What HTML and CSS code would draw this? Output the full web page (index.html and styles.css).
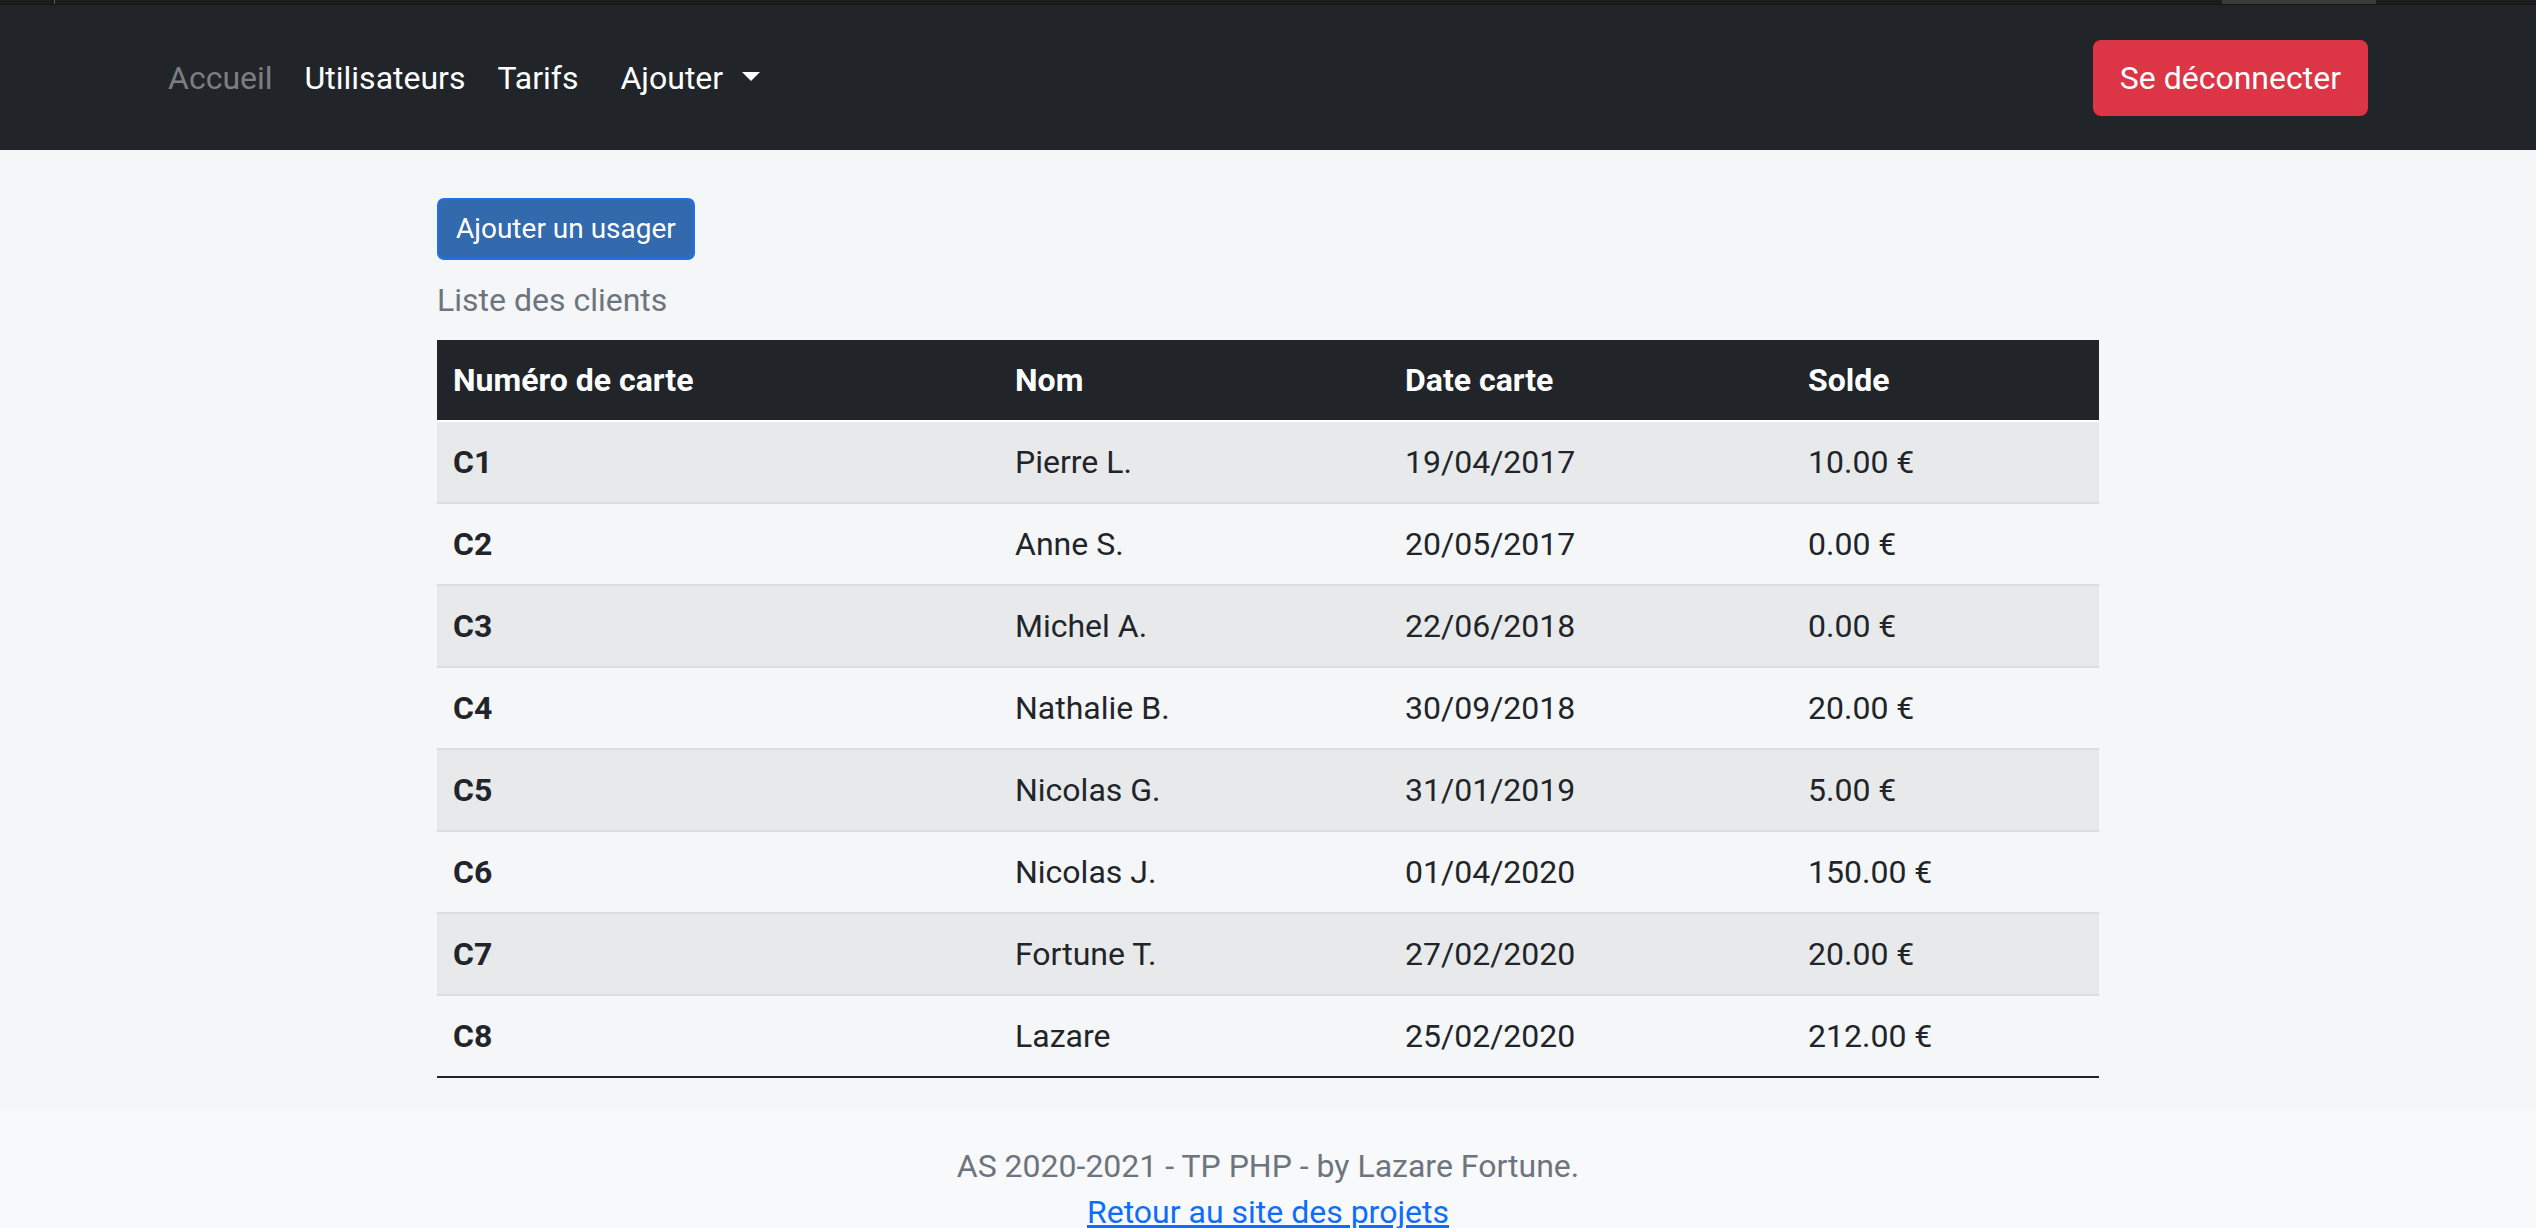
FILE: index.html
```html
<!DOCTYPE html>
<html lang="fr">
<head>
<meta charset="utf-8">
<title>Liste des clients</title>
<link rel="stylesheet" href="styles.css">
</head>
<body>
<div class="chrome">
  <span class="chrome-tick"></span>
  <span class="chrome-tab"></span>
</div>
<nav class="navbar">
  <ul class="nav-links">
    <li><a class="nav-link nav-link-muted" href="#">Accueil</a></li>
    <li><a class="nav-link" href="#">Utilisateurs</a></li>
    <li><a class="nav-link" href="#">Tarifs</a></li>
    <li class="dropdown"><a class="nav-link dropdown-toggle" href="#">Ajouter</a></li>
  </ul>
  <a class="btn-danger" href="#">Se déconnecter</a>
</nav>
<main class="main">
  <div class="content">
    <a class="btn-primary" href="#">Ajouter un usager</a>
    <table class="clients">
      <caption class="caption">Liste des clients</caption>
      <thead>
        <tr>
          <th class="col-num">Numéro de carte</th>
          <th class="col-nom">Nom</th>
          <th class="col-date">Date carte</th>
          <th class="col-solde">Solde</th>
        </tr>
      </thead>
      <tbody>
        <tr><th>C1</th><td>Pierre L.</td><td>19/04/2017</td><td>10.00 €</td></tr>
        <tr><th>C2</th><td>Anne S.</td><td>20/05/2017</td><td>0.00 €</td></tr>
        <tr><th>C3</th><td>Michel A.</td><td>22/06/2018</td><td>0.00 €</td></tr>
        <tr><th>C4</th><td>Nathalie B.</td><td>30/09/2018</td><td>20.00 €</td></tr>
        <tr><th>C5</th><td>Nicolas G.</td><td>31/01/2019</td><td>5.00 €</td></tr>
        <tr><th>C6</th><td>Nicolas J.</td><td>01/04/2020</td><td>150.00 €</td></tr>
        <tr><th>C7</th><td>Fortune T.</td><td>27/02/2020</td><td>20.00 €</td></tr>
        <tr><th>C8</th><td>Lazare</td><td>25/02/2020</td><td>212.00 €</td></tr>
      </tbody>
    </table>
  </div>
</main>
<footer class="footer">
  <p class="footer-line">AS 2020-2021 - TP PHP - by Lazare Fortune.</p>
  <p class="footer-line"><a class="footer-link" href="#">Retour au site des projets</a></p>
</footer>
</body>
</html>
```
FILE: styles.css
```css
html, body {
  margin: 0;
  padding: 0;
}

body {
  font-family: Roboto, "Noto Sans", sans-serif;
  font-size: 32px;
  line-height: 48px;
  color: #212529;
  background: #f8f9fa;
}

/* browser strip on top */
.chrome {
  position: relative;
  height: 4px;
  background: #1c1c1c;
  border-bottom: 1px solid #121212;
}
.chrome-tick {
  position: absolute;
  left: 54px;
  top: 0;
  width: 1px;
  height: 4px;
  background: #5a5a5a;
}
.chrome-tab {
  position: absolute;
  left: 2222px;
  top: 0;
  width: 154px;
  height: 4px;
  background: #3a3a3a;
}

/* navbar */
.navbar {
  height: 145px;
  background: #212529;
  display: flex;
  align-items: center;
  justify-content: space-between;
  padding: 0 168px 0 152px;
  box-sizing: border-box;
}
.nav-links {
  display: flex;
  align-items: center;
  list-style: none;
  margin: 0;
  padding: 0;
}
.nav-link {
  display: block;
  padding: 0 16px;
  color: #ffffff;
  text-decoration: none;
  line-height: 48px;
}
.nav-link-muted {
  color: #7b7e82;
}
.dropdown {
  margin-left: 10px;
}
.dropdown-toggle::after {
  content: "";
  display: inline-block;
  margin-left: 19px;
  vertical-align: 8px;
  border-top: 9.6px solid #ffffff;
  border-left: 9px solid transparent;
  border-right: 9px solid transparent;
}

.btn-danger {
  display: inline-block;
  background: #dc3545;
  color: #ffffff;
  text-decoration: none;
  border-radius: 8px;
  padding: 14px 27px;
  line-height: 48px;
}

/* main */
.main {
  background: #f5f6f8;
  padding: 48px 0 32px;
}
.content {
  width: 1662px;
  margin: 0 auto;
}
.btn-primary {
  display: inline-block;
  background: #336aad;
  color: #ffffff;
  text-decoration: none;
  font-size: 28px;
  line-height: 42px;
  padding: 8px 17px;
  border: 2px solid #1f6ff0;
  border-radius: 7px;
  vertical-align: top;
}

.clients {
  width: 1662px;
  border-collapse: collapse;
  table-layout: fixed;
}
.caption {
  caption-side: top;
  text-align: left;
  color: #6c757d;
  padding: 16px 0;
  line-height: 48px;
}
.clients th,
.clients td {
  box-sizing: border-box;
  padding: 16px;
  text-align: left;
  line-height: 48px;
  vertical-align: top;
}
.clients thead th {
  background: #212529;
  color: #ffffff;
  font-weight: 700;
  border-bottom: 2px solid #ffffff;
}
.clients tbody th {
  font-weight: 700;
}
.clients tbody tr {
  border-bottom: 2px solid #dcdde1;
}
.clients tbody tr:nth-child(odd) {
  background: #e8e9eb;
}
.clients tbody tr:last-child {
  border-bottom: 2px solid #212529;
}
.col-num { width: 562px; }
.col-nom { width: 390px; }
.col-date { width: 403px; }
.col-solde { width: 307px; }

/* footer */
.footer {
  background: #f8f9fa;
  padding: 32px 0 32px;
  text-align: center;
  color: #6c757d;
}
.footer-line {
  margin: 0;
  line-height: 48px;
}
.footer-line + .footer-line {
  margin-top: -2px;
}
.footer-link {
  color: #0d6efd;
  text-decoration: underline;
}
```
